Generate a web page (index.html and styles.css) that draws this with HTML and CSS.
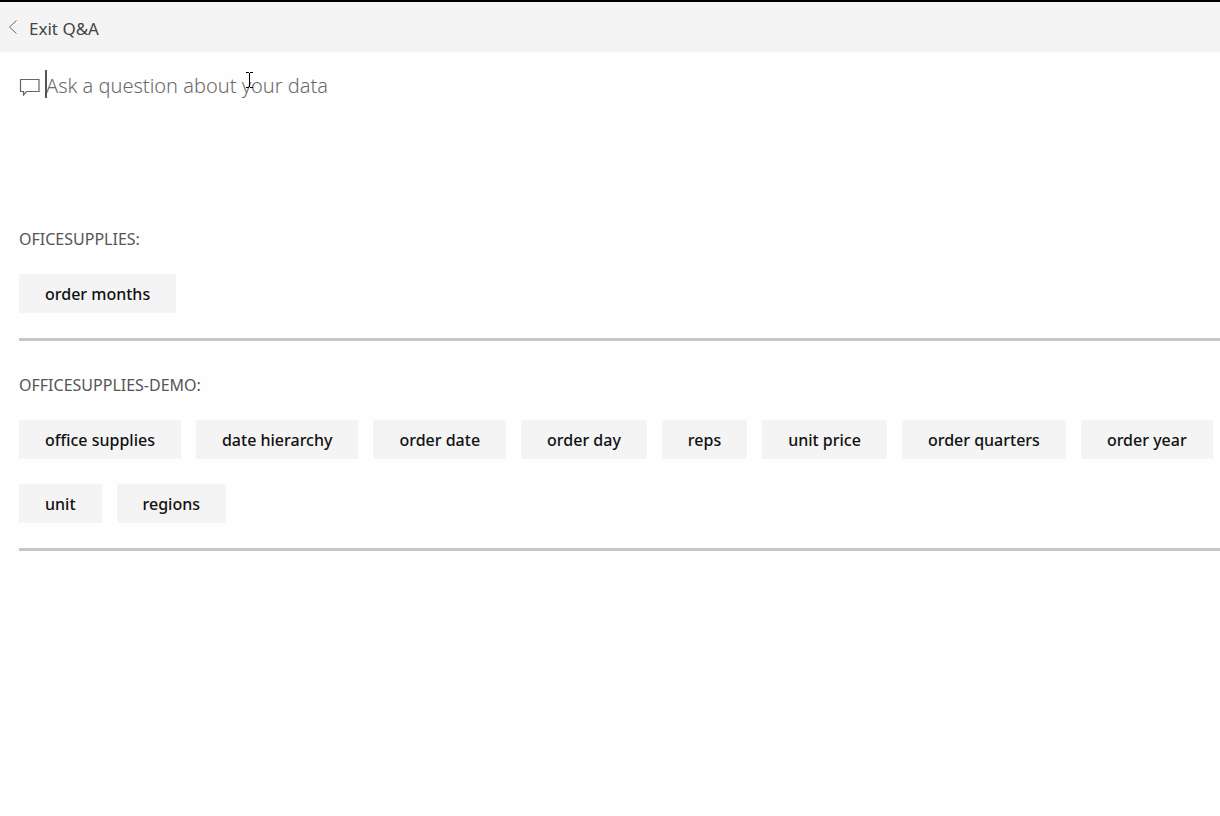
FILE: index.html
```html
<!DOCTYPE html>
<html lang="en">
<head>
    <meta charset="UTF-8">
    <meta name="viewport" content="width=device-width, initial-scale=1.0">
    <title>Q&amp;A</title>
    <link rel="stylesheet" href="styles.css">
</head>
<body>
    <header class="topbar">
        <a href="#" class="exit-link">
            <svg class="back-icon" width="10" height="16" viewBox="0 0 10 16" aria-hidden="true">
                <path d="M8.5 0.5 L1.5 7 L8.5 13.5" fill="none" stroke="#666" stroke-width="1"/>
            </svg>
            Exit Q&amp;A
        </a>
    </header>

    <main class="content">
        <form class="ask">
            <label for="question" class="ask-label" aria-label="Question">
                <svg width="22" height="20" viewBox="0 0 22 20" aria-hidden="true">
                    <path d="M1.5 3.5 H20 V15.5 H7.5 L4.5 19 V15.5 H1.5 Z" fill="none" stroke="#666" stroke-width="1.2"/>
                </svg>
            </label>
            <div class="ask-field">
                <input type="text" id="question" name="question" placeholder="Ask a question about your data">
                <span class="caret"></span>
                <svg class="pointer" width="9" height="18" viewBox="0 0 9 18" aria-hidden="true">
                    <path d="M1 1.5 H4 M5 1.5 H8 M4.5 2 V16 M1 16.5 H4 M5 16.5 H8" fill="none" stroke="#000" stroke-width="1"/>
                </svg>
            </div>
        </form>

        <section class="source">
            <h2>OFICESUPPLIES:</h2>
            <div class="terms">
                <button type="button">order months</button>
            </div>
        </section>

        <section class="source">
            <h2>OFFICESUPPLIES-DEMO:</h2>
            <div class="terms">
                <button type="button">office supplies</button>
                <button type="button">date hierarchy</button>
                <button type="button">order date</button>
                <button type="button">order day</button>
                <button type="button">reps</button>
                <button type="button">unit price</button>
                <button type="button">order quarters</button>
                <button type="button">order year</button>
                <button type="button">unit</button>
                <button type="button">regions</button>
            </div>
        </section>
    </main>
</body>
</html>
```
FILE: styles.css
```css
* {
    margin: 0;
    padding: 0;
    box-sizing: border-box;
}

body {
    font-family: 'Segoe UI', 'Noto Sans', sans-serif;
    background: #fefefe;
    color: #111;
}

.topbar {
    display: flex;
    align-items: center;
    height: 52px;
    padding: 2px 0 0 8px;
    background: #f4f4f4;
    border-top: 2px solid #000;
}

.exit-link {
    display: flex;
    align-items: center;
    gap: 11px;
    color: #444;
    font-size: 17px;
    font-weight: 400;
    text-decoration: none;
}

.content {
    padding-left: 19px;
}

.ask {
    display: flex;
    align-items: center;
    height: 68px;
    margin-bottom: 107px;
}

.ask-label {
    display: flex;
    width: 27px;
}

.ask-field {
    position: relative;
    flex: 1;
}

.ask-field input {
    width: 100%;
    height: 32px;
    padding-bottom: 2px;
    border: none;
    outline: none;
    background: transparent;
    font-family: inherit;
    font-size: 20px;
    font-weight: 300;
}

.ask-field input::placeholder {
    color: #6a6a6a;
    opacity: 1;
}

.caret {
    position: absolute;
    top: 0;
    left: -1px;
    width: 2px;
    height: 28px;
    background: #555;
}

.pointer {
    position: absolute;
    top: 1px;
    left: 199px;
}

.source {
    padding-bottom: 25px;
    margin-bottom: 32px;
    border-bottom: 3px solid #c6c6c6;
}

.source h2 {
    margin-bottom: 23px;
    color: #555;
    font-size: 16px;
    font-weight: 400;
    line-height: 24px;
}

.terms {
    display: flex;
    flex-wrap: wrap;
    gap: 25px 15px;
}

.terms button {
    height: 39px;
    padding: 0 26px;
    border: none;
    background: #f4f4f5;
    color: #111;
    font-family: inherit;
    font-size: 16px;
    font-weight: 500;
    cursor: pointer;
}

.terms button:hover {
    background: #eaeaea;
}
```
